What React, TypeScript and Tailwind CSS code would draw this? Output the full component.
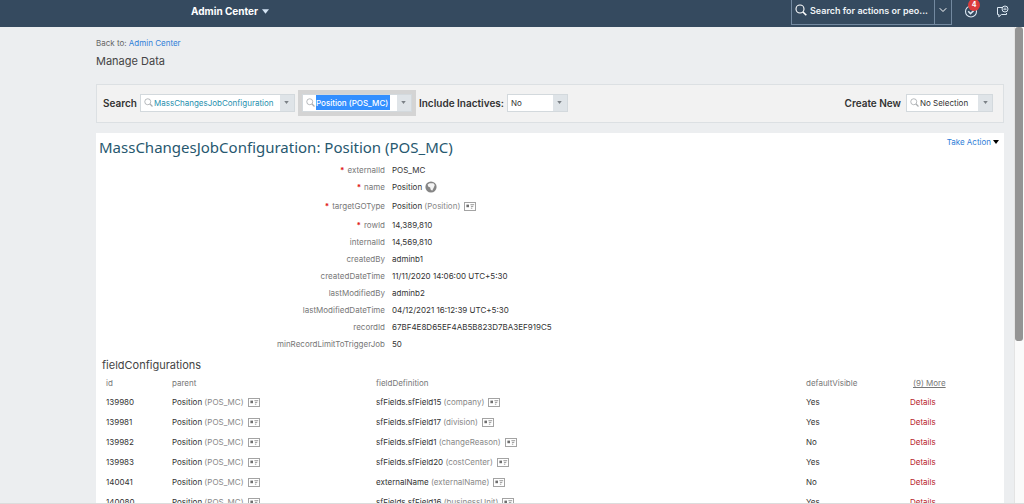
import { ChevronDown } from 'lucide-react';
import type { ReactNode } from 'react';

const columns = ['id', 'parent', 'fieldDefinition', 'defaultVisible'];

const rows = [
  { id: '139980', field: 'sfFields.sfField15', code: 'company', visible: 'Yes' },
  { id: '139981', field: 'sfFields.sfField17', code: 'division', visible: 'Yes' },
  { id: '139982', field: 'sfFields.sfField1', code: 'changeReason', visible: 'No' },
  { id: '139983', field: 'sfFields.sfField20', code: 'costCenter', visible: 'Yes' },
  { id: '140041', field: 'externalName', code: 'externalName', visible: 'No' },
  { id: '140080', field: 'sfFields.sfField16', code: 'businessUnit', visible: 'Yes' },
];

function SearchIcon({ className }: { className?: string }) {
  return (
    <svg viewBox="0 0 12 12" fill="none" stroke="currentColor" className={className}>
      <circle cx="5" cy="5" r="4" strokeWidth="1.1" />
      <path d="M8 8l3.3 3.3" strokeWidth="1.6" />
    </svg>
  );
}

function CardIcon() {
  return (
    <svg viewBox="0 0 12 9" fill="none" className="w-3 h-[9px] shrink-0 ml-1">
      <rect x="0.5" y="0.5" width="11" height="8" stroke="#a3a3a3" />
      <rect x="2.4" y="2.6" width="2.6" height="2.6" fill="#6f6f6f" />
      <path d="M6.4 2.7h3.8M6.9 4.4h2.4M6.9 6.2h1.4" stroke="#9a9a9a" />
    </svg>
  );
}

function GlobeIcon() {
  return (
    <svg viewBox="0 0 12 12" className="size-3 shrink-0 ml-[3px]">
      <circle cx="6" cy="6" r="5.6" fill="#858585" />
      <path d="M2.6 3.6L4.6 2.2 8.4 2.2 9.8 4 8.8 6.4 7.2 9.8 5.6 8.6 5.2 6.4 3.2 5.6z" fill="#f4f4f4" />
    </svg>
  );
}

function Caret({ className }: { className?: string }) {
  return (
    <svg viewBox="0 0 6 4" fill="currentColor" className={className}>
      <path d="M0 0h6L3 4z" />
    </svg>
  );
}

function Combo({ label, value, className }: { label: string; value: string; className: string }) {
  return (
    <div className="flex h-[18px] border border-[#d3d9dd] bg-white">
      <SearchIcon className="size-[9px] shrink-0 self-center ml-[3px] mr-px text-[#a9adb0]" />
      <input
        aria-label={label}
        defaultValue={value}
        className={`min-w-0 text-[8px] outline-none ${className}`}
      />
      <button
        aria-label={`${label} options`}
        className="ml-auto w-[14px] shrink-0 flex items-center justify-center bg-[#dfe4e8] text-[#7b8186]"
      >
        <Caret className="w-[5px] h-[3px]" />
      </button>
    </div>
  );
}

function TopBar() {
  return (
    <header className="h-[27px] shrink-0 flex items-start bg-[#354a5f] text-white">
      <button className="ml-[191px] mt-[3px] h-4 flex items-center gap-1 text-[10px] font-bold">
        Admin Center
        <Caret className="w-[7px] h-[5px] text-[#d5e5f5]" />
      </button>
      <div className="ml-auto w-[161px] h-[25px] flex border border-t-0 border-[#7389a0]">
        <SearchIcon className="size-3 shrink-0 mt-1 ml-[3px] mr-[3px]" />
        <input
          aria-label="Search for actions or people"
          placeholder="Search for actions or peo..."
          className="flex-1 min-w-0 h-5 text-[9px] font-semibold outline-none placeholder:text-[#eef2f6]"
        />
        <button aria-label="Search scope" className="w-[17px] shrink-0 pb-1 flex items-center justify-center border-l border-[#7389a0]">
          <ChevronDown className="size-3" />
        </button>
      </div>
      <button aria-label="To-do, 4 items" className="relative ml-3 mt-[5px]">
        <svg viewBox="0 0 14 14" fill="none" stroke="#dce8f3" className="size-[14px]">
          <circle cx="7" cy="6.5" r="5.5" strokeWidth="1.1" />
          <path d="M4.2 6.2l2.3 2.4 3.2-3" strokeWidth="1.5" />
        </svg>
        <span className="absolute -top-[6px] left-[4px] size-3 rounded-full bg-[#dc3c3c] text-[7px] leading-3 font-bold text-center">
          4
        </span>
      </button>
      <button aria-label="Feedback" className="ml-[18px] mr-[15px] mt-[5px]">
        <svg viewBox="0 0 13 13" fill="none" stroke="#dce8f3" strokeWidth="1" className="size-[13px]">
          <path d="M6 2.5H1.5v7h1.3v2.3L5.4 9.5h5.1V8" />
          <circle cx="9" cy="4" r="3" />
          <path d="M7.4 4.6h3.2M7.6 3.2h2.8" strokeWidth="0.8" />
        </svg>
      </button>
    </header>
  );
}

function Toolbar() {
  return (
    <div className="h-[39px] flex items-center border border-[#dce0e3] bg-[#f2f2f2] pl-[6px] pr-[10px] pb-0.5 text-[10px] font-semibold text-[#333]">
      <span>Search</span>
      <div className="ml-[3px] w-[155px]">
        <Combo label="Search type" value="MassChangesJobConfiguration" className="flex-1 font-normal text-[#1f8fae]" />
      </div>
      <div className="ml-[3px] w-[118px] p-1 bg-[#d4d4d4]">
        <Combo label="Search record" value="Position (POS_MC)" className="w-[74px] h-[15px] self-center bg-[#338fff] text-white font-medium" />
      </div>
      <label htmlFor="inactives" className="mx-[3px]">
        Include Inactives:
      </label>
      <div className="relative w-[61px] h-[18px] flex border border-[#d3d9dd] bg-white">
        <select id="inactives" className="w-full appearance-none pl-[3px] text-[8px] font-normal text-[#333] outline-none">
          <option>No</option>
          <option>Yes</option>
        </select>
        <span className="pointer-events-none absolute inset-y-0 right-0 w-[14px] flex items-center justify-center bg-[#dfe4e8] text-[#7b8186]">
          <Caret className="w-[5px] h-[3px]" />
        </span>
      </div>
      <span className="ml-auto">Create New</span>
      <div className="ml-[5px] w-[87px]">
        <Combo label="Create New" value="No Selection" className="flex-1 font-normal text-[#333]" />
      </div>
    </div>
  );
}

function Field({ label, required, className = 'h-[17px]', children }: { label: string; required?: boolean; className?: string; children: ReactNode }) {
  return (
    <div className={`flex items-center ${className}`}>
      <dt className="w-[289px] text-right text-[#777]">
        {required && <span className="mr-[3px] font-bold text-[#e02020]">*</span>}
        {label}
      </dt>
      <dd className="ml-[7px] flex items-center">{children}</dd>
    </div>
  );
}

function Details() {
  return (
    <dl className="mt-[5px]">
      <Field label="externalId" required>POS_MC</Field>
      <Field label="name" required className="h-[18px]">
        Position <GlobeIcon />
      </Field>
      <Field label="targetGOType" required className="h-5">
        Position&nbsp;<span className="text-[#888]">(Position)</span>
        <CardIcon />
      </Field>
      <Field label="rowId" required>14,389,810</Field>
      <Field label="internalId">14,569,810</Field>
      <Field label="createdBy">adminb1</Field>
      <Field label="createdDateTime">11/11/2020 14:06:00 UTC+5:30</Field>
      <Field label="lastModifiedBy">adminb2</Field>
      <Field label="lastModifiedDateTime">04/12/2021 16:12:39 UTC+5:30</Field>
      <Field label="recordId">67BF4E8D65EF4AB5B823D7BA3EF919C5</Field>
      <Field label="minRecordLimitToTriggerJob">50</Field>
    </dl>
  );
}

function FieldTable() {
  return (
    <table className="w-full table-fixed text-left">
      <colgroup>
        <col className="w-[76px]" />
        <col className="w-[204px]" />
        <col />
        <col className="w-[104px]" />
        <col className="w-[94px]" />
      </colgroup>
      <thead>
        <tr className="h-[19px] text-[#777]">
          {columns.map((name) => (
            <th key={name} className="p-0 first:pl-[10px] font-normal">
              {name}
            </th>
          ))}
          <th className="p-0 pl-[3px] font-normal">
            <a href="#more" className="underline">(9) More</a>
          </th>
        </tr>
      </thead>
      <tbody>
        {rows.map((row) => (
          <tr key={row.id} className="h-5">
            <td className="p-0 pl-[10px]">{row.id}</td>
            <td className="p-0">
              <div className="flex items-center">
                Position&nbsp;<span className="text-[#888]">(POS_MC)</span>
                <CardIcon />
              </div>
            </td>
            <td className="p-0">
              <div className="flex items-center">
                {row.field}&nbsp;<span className="text-[#888]">({row.code})</span>
                <CardIcon />
              </div>
            </td>
            <td className="p-0">{row.visible}</td>
            <td className="p-0">
              <a href={`#${row.id}`} className="text-[#b8252c]">Details</a>
            </td>
          </tr>
        ))}
      </tbody>
    </table>
  );
}

export default function App() {
  return (
    <div className="h-screen flex flex-col overflow-hidden bg-[#eceef0] font-['Inter',sans-serif] text-[8px] leading-3 text-[#333]">
      <TopBar />
      <div className="flex-1 min-h-0 flex border-b border-[#dcdcdc]">
        <main className="flex-1 min-w-0 pl-24 pr-[10px] pt-[10px] overflow-hidden">
          <p className="text-[#666]">
            Back to: <a href="#admin" className="text-[#2f80d8]">Admin Center</a>
          </p>
          <h1 className="mt-1 text-[11px] leading-4 text-[#444]">Manage Data</h1>
          <div className="mt-[15px]">
            <Toolbar />
          </div>
          <section className="mt-[10px] bg-white pt-[3px]">
            <div className="flex items-start justify-between pl-[3px] pr-[5px]">
              <h2 className="mt-0.5 font-['Noto_Sans',sans-serif] text-[15px] leading-[18px] text-[#27586f]">
                MassChangesJobConfiguration: Position (POS_MC)
              </h2>
              <button className="flex items-center gap-0.5 text-[#2f80d8]">
                Take Action
                <Caret className="w-[6px] h-1 text-black" />
              </button>
            </div>
            <Details />
            <h3 className="mt-[5px] ml-[6px] text-[11px] leading-4 text-[#444]">fieldConfigurations</h3>
            <FieldTable />
          </section>
        </main>
        <div className="w-[10px] shrink-0 bg-[#fafafa] border-l border-[#e4e4e4]">
          <div className="h-[314px] w-2 rounded-[3px] bg-[#949494]" />
        </div>
      </div>
    </div>
  );
}
